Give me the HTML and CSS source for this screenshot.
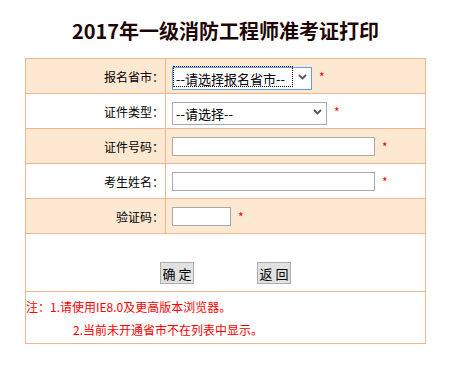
FILE: index.html
```html
<!DOCTYPE html>
<html lang="zh-CN">
<head>
<meta charset="utf-8">
<title>2017年一级消防工程师准考证打印</title>
<link rel="stylesheet" href="styles.css">
</head>
<body>
<div class="page">
  <h1 class="title">2017年一级消防工程师准考证打印</h1>
  <div class="form">
    <div class="row shade">
      <div class="label">报名省市：</div>
      <div class="field">
        <span class="select-wrap focused w-province">
          <select class="select"><option>--请选择报名省市--</option></select>
          <span class="focus-ring"></span>
          <svg class="chev" width="9" height="6" viewBox="0 0 9 6"><polyline points="1,1 4.5,4.5 8,1" fill="none" stroke="#555" stroke-width="1.8"/></svg>
        </span>
        <span class="req">*</span>
      </div>
    </div>
    <div class="row">
      <div class="label">证件类型：</div>
      <div class="field">
        <span class="select-wrap w-type">
          <select class="select"><option>--请选择--</option></select>
          <svg class="chev" width="9" height="6" viewBox="0 0 9 6"><polyline points="1,1 4.5,4.5 8,1" fill="none" stroke="#555" stroke-width="1.8"/></svg>
        </span>
        <span class="req">*</span>
      </div>
    </div>
    <div class="row shade">
      <div class="label">证件号码：</div>
      <div class="field">
        <input class="input w-long" type="text">
        <span class="req">*</span>
      </div>
    </div>
    <div class="row">
      <div class="label">考生姓名：</div>
      <div class="field">
        <input class="input w-long" type="text">
        <span class="req">*</span>
      </div>
    </div>
    <div class="row shade">
      <div class="label">验证码：</div>
      <div class="field">
        <input class="input w-code" type="text">
        <span class="req">*</span>
      </div>
    </div>
    <div class="actions">
      <button class="btn" type="button">确 定</button>
      <button class="btn" type="button">返 回</button>
    </div>
    <div class="notes">
      <p>注：1.请使用IE8.0及更高版本浏览器。</p>
      <p class="indent">2.当前未开通省市不在列表中显示。</p>
    </div>
  </div>
</div>
</body>
</html>
```
FILE: styles.css
```css
* { box-sizing: border-box; }

body {
  margin: 0;
  background: #fff;
  font-family: "Noto Sans CJK SC", "Liberation Sans", sans-serif;
  color: #000;
}

.page {
  width: 401px;
  margin-left: 25px;
  padding-top: 17px;
}

.title {
  margin: 0 0 13px;
  font-size: 20px;
  line-height: 28px;
  font-weight: bold;
  text-align: center;
  color: #1e0606;
}

.form {
  width: 401px;
  border: 1px solid #efb58e;
}

.row {
  display: flex;
  height: 35px;
  border-bottom: 1px solid #efb58e;
}

.row.shade { background: #fde9d1; }

.label {
  width: 140px;
  border-right: 1px solid #efb58e;
  display: flex;
  align-items: center;
  justify-content: flex-end;
  padding-right: 1px;
  font-size: 12px;
}

.field {
  flex: 1;
  display: flex;
  align-items: center;
  padding-left: 6px;
}

.select-wrap {
  position: relative;
  display: inline-block;
  height: 23px;
}

.w-province { width: 140px; }
.w-type { width: 155px; }

.select {
  appearance: none;
  -webkit-appearance: none;
  width: 100%;
  height: 100%;
  margin: 0;
  border: 1px solid #a9a9a9;
  border-radius: 0;
  background: #fff;
  padding: 0 0 0 3px;
  font-family: inherit;
  font-size: 13px;
  color: #000;
}

.focused .select { border-color: #5b9fe8; }

.focus-ring {
  position: absolute;
  left: 1px;
  top: 1px;
  bottom: 1px;
  right: 19px;
  border: 1px dotted #000;
  pointer-events: none;
}

.chev {
  position: absolute;
  right: 5px;
  top: 9px;
  pointer-events: none;
}

.input {
  height: 19px;
  margin: 0;
  border: 1px solid #a9a9a9;
  background: #fff;
  padding: 0 2px;
  font-size: 12px;
}

.w-long { width: 203px; }
.w-code { width: 59px; }

.req {
  color: #f00;
  font-size: 12px;
  margin-left: 7px;
  line-height: 1;
  position: relative;
  top: 1px;
}

.actions {
  height: 58px;
  display: flex;
  justify-content: center;
  align-items: flex-end;
  gap: 63px;
  padding-bottom: 7px;
  border-bottom: 1px solid #efb58e;
}

.btn {
  width: 34px;
  height: 22px;
  margin: 0;
  padding: 0;
  border: 1px solid #adadad;
  border-radius: 0;
  background: #e1e1e1;
  font-family: inherit;
  font-size: 13px;
  color: #000;
}

.notes {
  padding: 3px 0 2px;
  color: #f00;
  font-size: 12px;
  line-height: 23px;
}

.notes p { margin: 0; }

.notes .indent { padding-left: 47px; }
```
